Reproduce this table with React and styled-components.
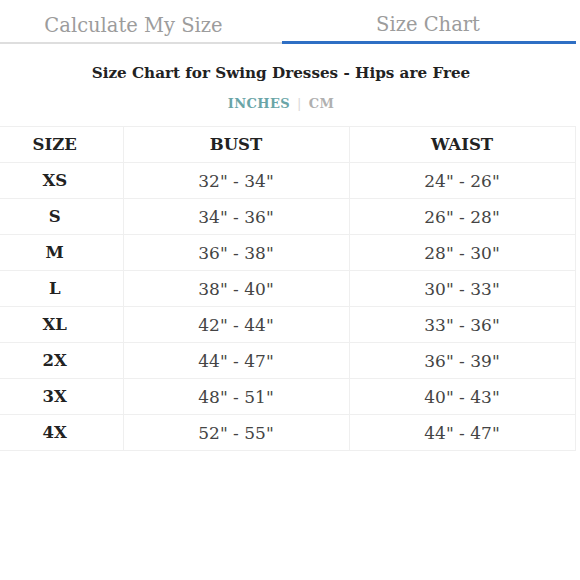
import React from "react";
import styled, { createGlobalStyle } from "styled-components";

const Global = createGlobalStyle`
  html, body { margin: 0; padding: 0; background: #fff; }
  body { font-family: "DejaVu Serif", "Liberation Serif", serif; }
`;

const Page = styled.div`
  width: 576px;
`;

const Tabs = styled.div`
  display: flex;
  height: 44px;
`;

const Tab = styled.div`
  flex: ${(p) => (p.$active ? "1 1 auto" : "0 0 282px")};
  display: flex;
  align-items: center;
  justify-content: center;
  padding-top: 8px;
  padding-right: ${(p) => (p.$active ? "2px" : "15px")};
  box-sizing: border-box;
  height: 44px;
  font-size: 19.5px;
  color: #9c9c9c;
  border-bottom: ${(p) => (p.$active ? "3px solid #2f6fc4" : "2px solid #dedede")};
  margin-bottom: ${(p) => (p.$active ? "0" : "1px")};
`;

const Heading = styled.div`
  padding-right: 14px;
  text-align: center;
`;

const Title = styled.h2`
  margin: 20px 0 0;
  font-size: 15.2px;
  font-weight: bold;
  color: #222;
`;

const Units = styled.div`
  margin-top: 14px;
  font-size: 13px;
  font-weight: bold;
  letter-spacing: 0.4px;
`;

const Unit = styled.span`
  color: ${(p) => (p.$active ? "#6aa5a7" : "#b0b0b0")};
`;

const Sep = styled.span`
  color: #d8d8d8;
  font-weight: normal;
  margin: 0 7px;
`;

const Table = styled.table`
  margin-top: 15px;
  width: 575px;
  border-collapse: collapse;
  table-layout: fixed;
`;

const Cell = styled.td`
  height: 35px;
  border: 1px solid #efefef;
  text-align: center;
  vertical-align: middle;
  padding: 0;
  font-size: ${(p) => (p.$bold ? "16.5px" : "17px")};
  font-weight: ${(p) => (p.$bold ? "bold" : "normal")};
  color: ${(p) => (p.$bold ? "#222" : "#444")};
  &:first-child {
    border-left: none;
    padding-right: 13px;
  }
`;

const rows = [
  ["XS", '32" - 34"', '24" - 26"'],
  ["S", '34" - 36"', '26" - 28"'],
  ["M", '36" - 38"', '28" - 30"'],
  ["L", '38" - 40"', '30" - 33"'],
  ["XL", '42" - 44"', '33" - 36"'],
  ["2X", '44" - 47"', '36" - 39"'],
  ["3X", '48" - 51"', '40" - 43"'],
  ["4X", '52" - 55"', '44" - 47"'],
];

export default function App() {
  return (
    <Page>
      <Global />
      <Tabs>
        <Tab>Calculate My Size</Tab>
        <Tab $active>Size Chart</Tab>
      </Tabs>
      <Heading>
        <Title>Size Chart for Swing Dresses - Hips are Free</Title>
        <Units>
          <Unit $active>INCHES</Unit>
          <Sep>|</Sep>
          <Unit>CM</Unit>
        </Units>
      </Heading>
      <Table>
        <colgroup>
          <col style={{ width: 123 }} />
          <col style={{ width: 226 }} />
          <col style={{ width: 226 }} />
        </colgroup>
        <thead>
          <tr>
            <Cell as="th" $bold>SIZE</Cell>
            <Cell as="th" $bold>BUST</Cell>
            <Cell as="th" $bold>WAIST</Cell>
          </tr>
        </thead>
        <tbody>
          {rows.map((r) => (
            <tr key={r[0]}>
              <Cell $bold>{r[0]}</Cell>
              <Cell>{r[1]}</Cell>
              <Cell>{r[2]}</Cell>
            </tr>
          ))}
        </tbody>
      </Table>
    </Page>
  );
}
